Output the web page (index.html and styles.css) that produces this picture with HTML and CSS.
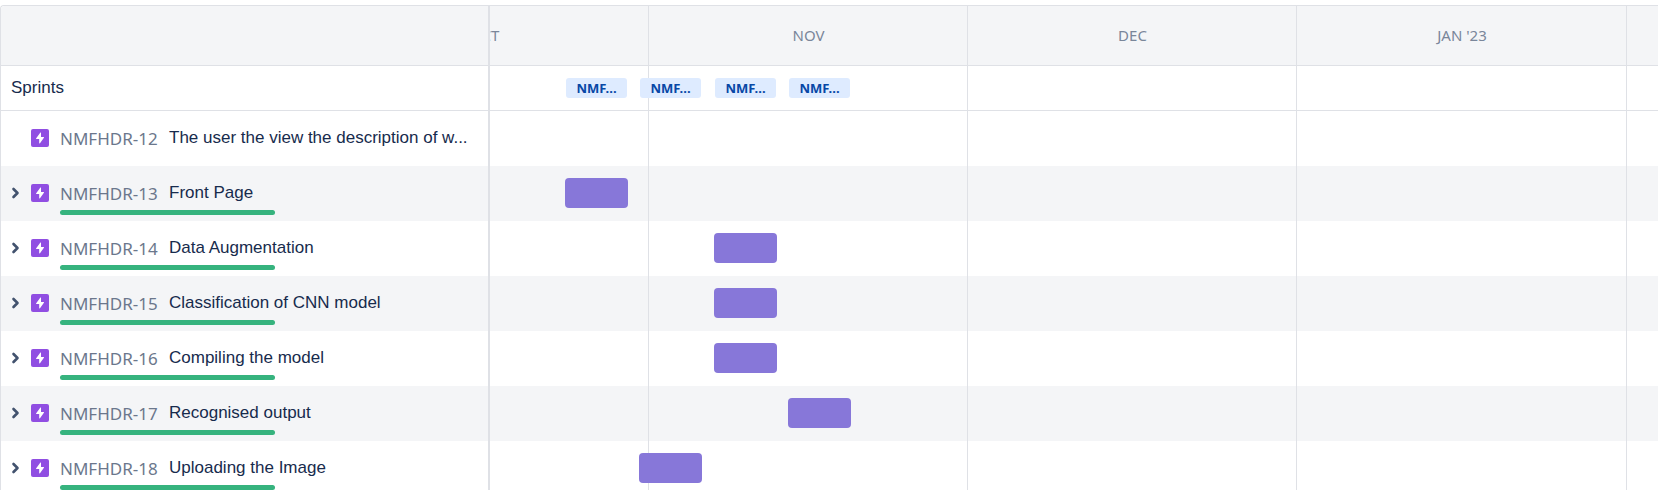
FILE: index.html
```
<!DOCTYPE html>
<html lang="en">
<head>
<meta charset="utf-8">
<title>Roadmap</title>
<link rel="stylesheet" href="styles.css">
</head>
<body>
<svg class="sprite" aria-hidden="true">
  <symbol id="epic" viewBox="0 0 18 18">
    <rect width="18" height="18" rx="2" fill="#904ee2"/>
    <path d="M10 4v4h2.6a.4.4 0 0 1 .3.7L9 14.2c-.3.4-.8.3-.8-.2v-4H5.500a.4.4 0 0 1-.3-.7L9.200 3.800c.3-.4.8-.3.8.2z" fill="#fff"/>
  </symbol>
  <symbol id="chevron" viewBox="0 0 12 14">
    <path d="M3.500 3l4 4-4 4" fill="none" stroke="#42526e" stroke-width="2.600" stroke-linecap="round" stroke-linejoin="round"/>
  </symbol>
</svg>
<main class="roadmap">
  <div class="months grid-lines" aria-hidden="true"><i></i><i></i><i></i><i></i></div>
  <header class="row header">
    <div class="side"></div>
    <div class="months">
      <div class="month clipped"><span>OCT</span></div>
      <div class="month">NOV</div>
      <div class="month">DEC</div>
      <div class="month">JAN '23</div>
    </div>
  </header>
  <section class="row sprints">
    <div class="side">Sprints</div>
    <div class="track">
      <span class="sprint week-1">NMF...</span>
      <span class="sprint week-2">NMF...</span>
      <span class="sprint week-3">NMF...</span>
      <span class="sprint week-4">NMF...</span>
    </div>
  </section>
  <section class="row epic">
    <div class="side">
      <span class="toggle"></span>
      <svg class="icon"><use href="#epic"/></svg>
      <div class="details"><div class="line"><span class="key">NMFHDR-12</span><span class="title">The user the view the description of w...</span></div></div>
    </div>
    <div class="track"></div>
  </section>
  <section class="row epic shaded">
    <div class="side">
      <button class="toggle" aria-label="Expand NMFHDR-13"><svg><use href="#chevron"/></svg></button>
      <svg class="icon"><use href="#epic"/></svg>
      <div class="details"><div class="line"><span class="key">NMFHDR-13</span><span class="title">Front Page</span></div><div class="progress"></div></div>
    </div>
    <div class="track"><div class="bar week-1"></div></div>
  </section>
  <section class="row epic">
    <div class="side">
      <button class="toggle" aria-label="Expand NMFHDR-14"><svg><use href="#chevron"/></svg></button>
      <svg class="icon"><use href="#epic"/></svg>
      <div class="details"><div class="line"><span class="key">NMFHDR-14</span><span class="title">Data Augmentation</span></div><div class="progress"></div></div>
    </div>
    <div class="track"><div class="bar week-3"></div></div>
  </section>
  <section class="row epic shaded">
    <div class="side">
      <button class="toggle" aria-label="Expand NMFHDR-15"><svg><use href="#chevron"/></svg></button>
      <svg class="icon"><use href="#epic"/></svg>
      <div class="details"><div class="line"><span class="key">NMFHDR-15</span><span class="title">Classification of CNN model</span></div><div class="progress"></div></div>
    </div>
    <div class="track"><div class="bar week-3"></div></div>
  </section>
  <section class="row epic">
    <div class="side">
      <button class="toggle" aria-label="Expand NMFHDR-16"><svg><use href="#chevron"/></svg></button>
      <svg class="icon"><use href="#epic"/></svg>
      <div class="details"><div class="line"><span class="key">NMFHDR-16</span><span class="title">Compiling the model</span></div><div class="progress"></div></div>
    </div>
    <div class="track"><div class="bar week-3"></div></div>
  </section>
  <section class="row epic shaded">
    <div class="side">
      <button class="toggle" aria-label="Expand NMFHDR-17"><svg><use href="#chevron"/></svg></button>
      <svg class="icon"><use href="#epic"/></svg>
      <div class="details"><div class="line"><span class="key">NMFHDR-17</span><span class="title">Recognised output</span></div><div class="progress"></div></div>
    </div>
    <div class="track"><div class="bar week-4"></div></div>
  </section>
  <section class="row epic">
    <div class="side">
      <button class="toggle" aria-label="Expand NMFHDR-18"><svg><use href="#chevron"/></svg></button>
      <svg class="icon"><use href="#epic"/></svg>
      <div class="details"><div class="line"><span class="key">NMFHDR-18</span><span class="title">Uploading the Image</span></div><div class="progress"></div></div>
    </div>
    <div class="track"><div class="bar week-2"></div></div>
  </section>
</main>
</body>
</html>
```
FILE: styles.css
```
* { box-sizing: border-box; }

body {
  margin: 0;
  padding-top: 5px;
  height: 100vh;
  overflow: hidden;
  background: #fff;
  color: #172b4d;
  font: 17px/22px "Liberation Sans", Arial, sans-serif;
}

.sprite { position: absolute; width: 0; height: 0; }

.roadmap {
  position: relative;
  border-top: 1px solid #dfe1e6;
  border-left: 1px solid #dfe1e6;
  border-top-left-radius: 4px;
}

.row { display: flex; }

.side {
  flex: 0 0 489px;
  display: flex;
  border-right: 2px solid #dfe1e6;
}

.months {
  flex: 1;
  display: grid;
  grid-template-columns: 159px 319px 329px 330px 1fr;
}

/* Month dividers lie over the row shading and under the bars. */
.grid-lines {
  position: absolute;
  z-index: 1;
  inset: 0 0 0 489px;
  pointer-events: none;
}
.grid-lines i { border-right: 1px solid #dfe1e6; }

.header, .shaded { background: #f4f5f7; }

.header {
  height: 60px;
  border-bottom: 1px solid #dfe1e6;
  border-top-left-radius: 4px;
}

.month {
  display: flex;
  align-items: center;
  justify-content: center;
  padding-bottom: 2px;
  color: #7a869a;
  font: 15px/20px "Noto Sans", "Open Sans", sans-serif;
}
.clipped { justify-content: flex-end; overflow: hidden; }
.clipped span { flex: 0 0 329px; text-align: center; }

.sprints {
  height: 45px;
  border-bottom: 1px solid #dfe1e6;
}
.sprints .side { align-items: center; padding-left: 10px; }

.track {
  position: relative;
  z-index: 2;
  flex: 1;
  display: grid;
  grid-template-columns: 74px 75px 74px 75px;
  align-items: center;
  padding-left: 75px;
}
.week-1 { grid-column: 1; }
.week-2 { grid-column: 2; }
.week-3 { grid-column: 3; }
.week-4 { grid-column: 4; }

.sprint {
  width: 61px;
  margin-left: 1px;
  border-radius: 3px;
  background: #deebff;
  color: #0747a6;
  font: bold 13px/20px "Noto Sans", "Open Sans", sans-serif;
  text-align: center;
}

.bar {
  width: 63px;
  height: 30px;
  border-radius: 4px;
  background: #8777d9;
}

.epic { height: 55px; }
.epic .side { align-items: flex-start; padding-left: 9px; }
.epic .track { padding-bottom: 1px; }

.toggle {
  flex: 0 0 12px;
  height: 14px;
  margin: 20px 9px 0 0;
  padding: 0;
  border: 0;
  background: none;
}
.toggle svg { display: block; width: 12px; height: 14px; }

.icon { flex: none; width: 18px; height: 18px; margin: 18px 11px 0 0; }

.details { flex: 1; padding-top: 16px; }
.line { display: flex; gap: 10px; height: 28px; white-space: nowrap; }
.key {
  flex: 0 0 99px;
  color: #6b778c;
  font: 17px/24px "Noto Sans", "Open Sans", sans-serif;
}
.progress {
  width: 215px;
  height: 5px;
  border-radius: 3px;
  background: #36b37e;
}
```
